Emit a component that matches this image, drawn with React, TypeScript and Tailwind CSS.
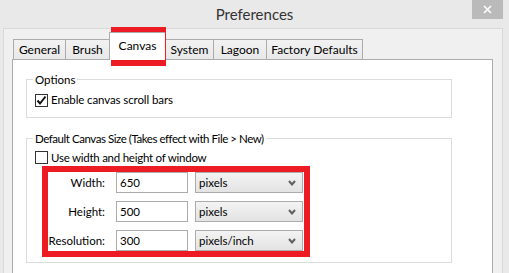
import React from "react";

const tabs = [
  { label: "General", w: "w-[52px]" },
  { label: "Brush", w: "w-[44px]" },
  { label: "Canvas", w: "w-[56px]", active: true },
  { label: "System", w: "w-[48px]" },
  { label: "Lagoon", w: "w-[53px]" },
  { label: "Factory Defaults", w: "w-[97px]", last: true },
];

const rows = [
  { label: "Width:", value: "650", unit: "pixels" },
  { label: "Height:", value: "500", unit: "pixels" },
  { label: "Resolution:", value: "300", unit: "pixels/inch" },
];

function Checkbox({ checked }: { checked?: boolean }) {
  return (
    <span className="w-[13px] h-[13px] border border-[#333333] bg-white flex items-center justify-center shrink-0">
      {checked && (
        <svg width="11" height="11" viewBox="0 0 11 11">
          <path d="M1.5 5.5 L4 8.5 L9.5 1.5" fill="none" stroke="#111" strokeWidth="2" />
        </svg>
      )}
    </span>
  );
}

function Chevron() {
  return (
    <svg width="8" height="6" viewBox="0 0 8 6" className="shrink-0">
      <path d="M1 1 L4 4.5 L7 1" fill="none" stroke="#5f5f5f" strokeWidth="2" />
    </svg>
  );
}

export default function App() {
  return (
    <div
      className="relative w-[509px] h-[273px] overflow-hidden bg-[#e9e9e9] text-[11.5px] text-black"
      style={{ fontFamily: 'Lato, "Noto Sans", sans-serif' }}
    >
      {/* 타이틀 바 */}
      <div className="h-[28px] flex items-center justify-center text-[15px] text-[#333333]">
        Preferences
      </div>
      <div className="absolute top-0 left-[472px] w-[31px] h-[19px] bg-[#bababa] flex items-center justify-center">
        <svg width="9" height="9" viewBox="0 0 9 9">
          <path d="M1 1 L8 8 M8 1 L1 8" stroke="#fff" strokeWidth="1.6" />
        </svg>
      </div>

      {/* 창 본체 */}
      <div className="ml-[3px] w-[500px] h-[260px] border border-[#d9d9d9] bg-[#f0f0f0] pt-[10px] pl-[8px]">
        {/* 탭 */}
        <div className="flex items-end h-[20px] pl-[1px] leading-none text-[12px]">
          {tabs.map((t) =>
            t.active ? (
              <div
                key={t.label}
                className={`${t.w} h-[28px] -mb-[1px] relative z-10 bg-white border-t border-l border-[#acacac] flex items-center justify-center pb-[2px]`}
              >
                {t.label}
              </div>
            ) : (
              <div
                key={t.label}
                className={`${t.w} h-[20px] bg-gradient-to-b from-[#f2f2f2] to-[#e8e8e8] border-t border-l ${
                  t.last ? "border-r" : ""
                } border-[#acacac] flex items-center justify-center`}
              >
                {t.label}
              </div>
            )
          )}
        </div>

        {/* 탭 내용 */}
        <div className="w-[481px] h-[230px] bg-white border border-[#acacac] pt-[12px] pl-[13px]">
          <fieldset className="w-[426px] border border-[#dcdcdc] pl-[8px] pt-[6px] pb-[10px] m-0">
            <legend className="-ml-[2px] px-[2px] leading-[15px]">Options</legend>
            <label className="flex items-center gap-[3px] h-[14px]">
              <Checkbox checked />
              <span className="tracking-[-0.1px]">Enable canvas scroll bars</span>
            </label>
          </fieldset>

          <fieldset className="w-[426px] mt-[13px] border border-[#dcdcdc] pl-[8px] pt-[5px] pb-[11px] m-0">
            <legend className="-ml-[2px] px-[2px] leading-[15px] tracking-[-0.45px]">
              Default Canvas Size (Takes effect with File &gt; New)
            </legend>
            <label className="flex items-center gap-[3px] h-[13px]">
              <Checkbox />
              <span className="tracking-[-0.25px]">Use width and height of window</span>
            </label>

            <div className="mt-[8px] -ml-[8px] flex flex-col gap-[8px]">
              {rows.map((r) => (
                <div key={r.label} className="flex items-center h-[21px]">
                  <span className="w-[79px] text-right pr-[1px] whitespace-nowrap">{r.label}</span>
                  <div className="ml-[10px] w-[72px] h-[21px] border border-[#acacac] bg-white flex items-center pl-[3px]">
                    {r.value}
                  </div>
                  <div className="ml-[7px] w-[108px] h-[21px] border border-[#acacac] bg-gradient-to-b from-[#f3f3f3] to-[#e3e3e3] flex items-center justify-between pl-[3px] pr-[6px]">
                    <span>{r.unit}</span>
                    <Chevron />
                  </div>
                </div>
              ))}
            </div>
          </fieldset>
        </div>
      </div>

      {/* 강조 표시 (빨간 박스) */}
      <div className="absolute left-[111px] top-[27px] w-[55px] h-[39px] border-[6px] border-[#ed1c24] pointer-events-none" />
      <div className="absolute left-[42px] top-[166px] w-[268px] h-[91px] border-[6px] border-[#ed1c24] pointer-events-none" />
    </div>
  );
}
